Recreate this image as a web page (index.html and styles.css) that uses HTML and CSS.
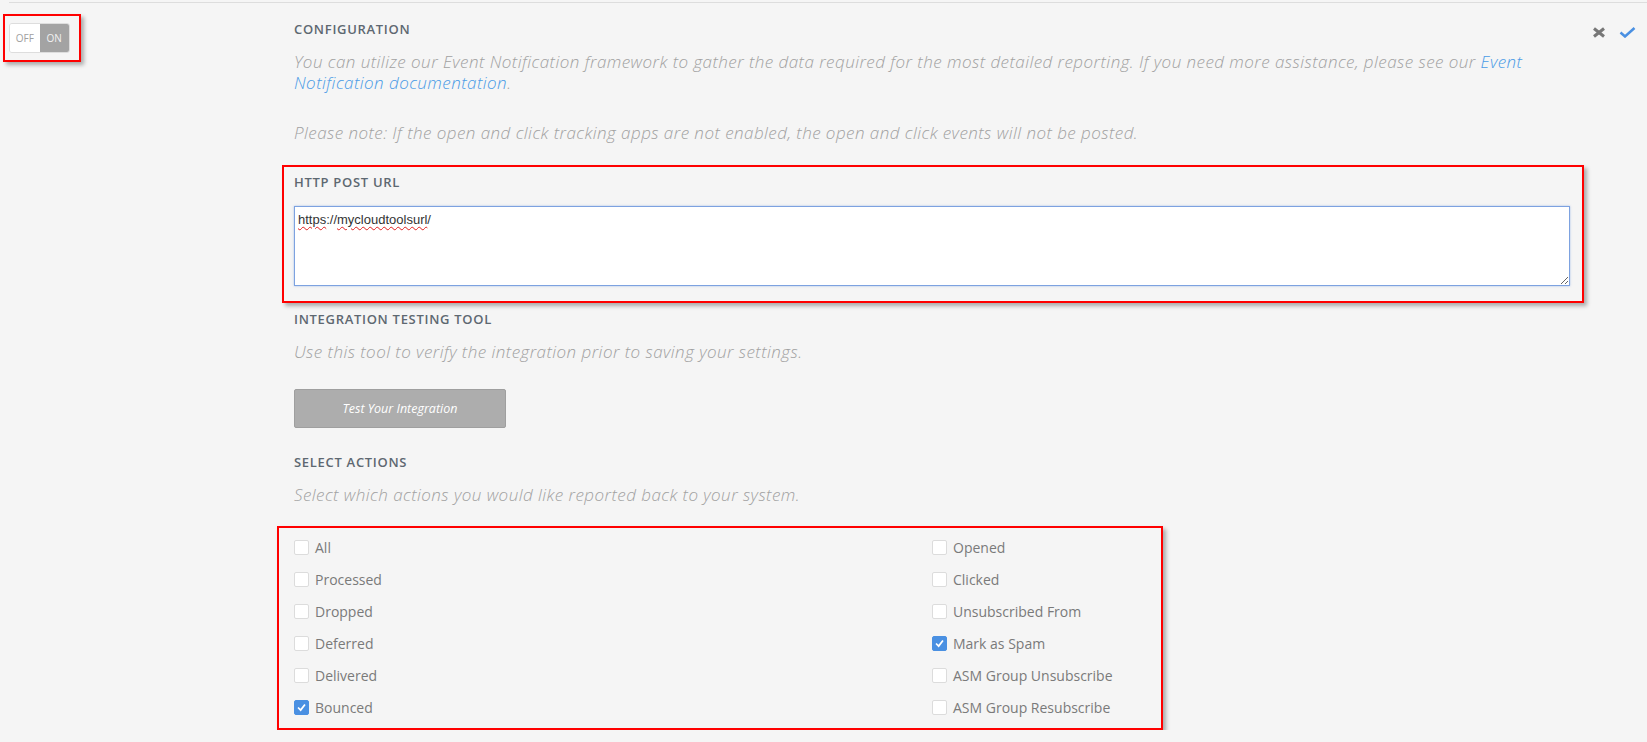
FILE: index.html
```html
<!DOCTYPE html>
<html lang="en">
<head>
    <meta charset="UTF-8">
    <title>Event Notification Settings</title>
    <link rel="stylesheet" href="styles.css">
</head>
<body>
    <div class="page">
        <div class="side">
            <div class="mark mark-toggle">
                <div class="toggle">
                    <span class="off">OFF</span>
                    <span class="on">ON</span>
                </div>
            </div>
        </div>

        <div class="main">
            <h3 class="label">Configuration</h3>
            <p class="note first">You can utilize our Event Notification framework to gather the data required for the most detailed reporting. If you need more assistance, please see our <a href="#">Event Notification documentation</a>.</p>
            <p class="note spaced">Please note: If the open and click tracking apps are not enabled, the open and click events will not be posted.</p>

            <div class="mark mark-url">
                <h3 class="label">HTTP Post URL</h3>
                <div class="url-box"><span class="typo">https</span>://<span class="typo">mycloudtoolsurl</span>/</div>
            </div>

            <h3 class="label label-gap">Integration Testing Tool</h3>
            <p class="note">Use this tool to verify the integration prior to saving your settings.</p>
            <button class="test-btn">Test Your Integration</button>

            <h3 class="label label-actions">Select Actions</h3>
            <p class="note">Select which actions you would like reported back to your system.</p>

            <div class="mark mark-actions">
                <div class="checks">
                    <label class="check"><span class="box"></span>All</label>
                    <label class="check"><span class="box"></span>Opened</label>
                    <label class="check"><span class="box"></span>Processed</label>
                    <label class="check"><span class="box"></span>Clicked</label>
                    <label class="check"><span class="box"></span>Dropped</label>
                    <label class="check"><span class="box"></span>Unsubscribed From</label>
                    <label class="check"><span class="box"></span>Deferred</label>
                    <label class="check"><span class="box checked"><svg viewBox="0 0 15 15"><polyline points="3.5,7.5 6.5,10.5 11.5,4" /></svg></span>Mark as Spam</label>
                    <label class="check"><span class="box"></span>Delivered</label>
                    <label class="check"><span class="box"></span>ASM Group Unsubscribe</label>
                    <label class="check"><span class="box checked"><svg viewBox="0 0 15 15"><polyline points="3.5,7.5 6.5,10.5 11.5,4" /></svg></span>Bounced</label>
                    <label class="check"><span class="box"></span>ASM Group Resubscribe</label>
                </div>
            </div>
        </div>

        <div class="actions">
            <svg class="icon-x" viewBox="0 0 14 11"><line x1="2" y1="1.5" x2="12" y2="9.5" /><line x1="12" y1="1.5" x2="2" y2="9.5" /></svg>
            <svg class="icon-ok" viewBox="0 0 17 11"><polyline points="1.5,5.5 6,9.5 15.5,1" /></svg>
        </div>
    </div>
</body>
</html>
```

FILE: styles.css
```css
body {
    margin: 0;
    background-color: #f5f5f5;
    font-family: "Open Sans", Arial, sans-serif;
    color: #777;
}
.page {
    display: flex;
    margin: 2px 0 0 9px;
    border-top: 1px solid #ddd;
}
.side {
    width: 285px;
    flex: none;
}
.main {
    width: 1276px;
    flex: none;
    padding-top: 18px;
}
.actions {
    display: flex;
    gap: 13px;
    padding: 24px 0 0 22px;
}

/* red annotation frames */
.mark {
    border: 2px solid #f00;
    box-shadow: 3px 3px 4px rgba(0,0,0,0.3);
}
.mark-toggle {
    display: inline-block;
    margin: 11px 0 0 -6px;
    padding: 7px 9px 7px 4px;
}
.mark-url {
    margin: 22px -14px 0 -12px;
    padding: 7px 12px 15px 10px;
}
.mark-actions {
    box-sizing: border-box;
    width: 886px;
    margin: 21px 0 0 -17px;
    padding: 3px 0 5px 15px;
}

.toggle {
    display: flex;
    width: 61px;
    height: 30px;
    box-sizing: border-box;
    border: 1px solid #ddd;
    border-radius: 3px;
    overflow: hidden;
    font-size: 10px;
}
.toggle span {
    flex: 1;
    display: flex;
    align-items: center;
    justify-content: center;
}
.toggle .off {
    background-color: #fff;
    color: #a0a0a0;
}
.toggle .on {
    background-color: #a3a3a3;
    color: #f2f2f2;
}

.label {
    margin: 0;
    font-size: 13px;
    line-height: 16px;
    font-weight: 600;
    letter-spacing: 0.7px;
    text-transform: uppercase;
    color: #5e6871;
}
.label-gap {
    margin-top: 8px;
}
.label-actions {
    margin-top: 26px;
}
.note {
    margin: 14px 0 0;
    font-size: 17px;
    line-height: 21px;
    letter-spacing: 0.45px;
    font-style: italic;
    font-weight: 300;
    color: #a1a1a1;
}
.note.spaced {
    margin-top: 29px;
}
.note a {
    color: #4a9be6;
    text-decoration: none;
}

.url-box {
    margin-top: 16px;
    height: 80px;
    box-sizing: border-box;
    padding: 5px 3px;
    background-color: #fff;
    border: 1px solid #7da2e0;
    box-shadow: 0 0 2px rgba(90,140,220,0.5);
    font-family: "Liberation Sans", Arial, sans-serif;
    font-size: 13px;
    color: #333;
    overflow: auto;
    resize: vertical;
}
.typo {
    text-decoration: underline wavy #e02020;
    text-decoration-thickness: 1px;
    text-underline-offset: 2px;
}

.test-btn {
    display: block;
    width: 212px;
    height: 39px;
    margin-top: 27px;
    background-color: #adadad;
    border: 1px solid #9f9f9f;
    border-radius: 2px;
    color: #fff;
    font-family: "Open Sans", Arial, sans-serif;
    font-size: 12.5px;
    font-style: italic;
    font-weight: 400;
    cursor: pointer;
}

.checks {
    display: grid;
    grid-template-columns: 638px auto;
}
.check {
    display: flex;
    align-items: center;
    height: 32px;
    font-size: 14px;
    color: #7a7a7a;
}
.box {
    width: 15px;
    height: 15px;
    box-sizing: border-box;
    margin-right: 6px;
    border: 1px solid #dcdcdc;
    border-radius: 2px;
    background-color: #fff;
}
.box.checked {
    background-color: #4a90e2;
    border-color: #4a90e2;
}
.box svg {
    display: block;
    width: 13px;
    height: 13px;
    fill: none;
    stroke: #fff;
    stroke-width: 2;
}

.icon-x {
    width: 14px;
    height: 11px;
    stroke: #777;
    stroke-width: 3;
}
.icon-ok {
    width: 17px;
    height: 11px;
    fill: none;
    stroke: #4a90e2;
    stroke-width: 2.5;
}
```
